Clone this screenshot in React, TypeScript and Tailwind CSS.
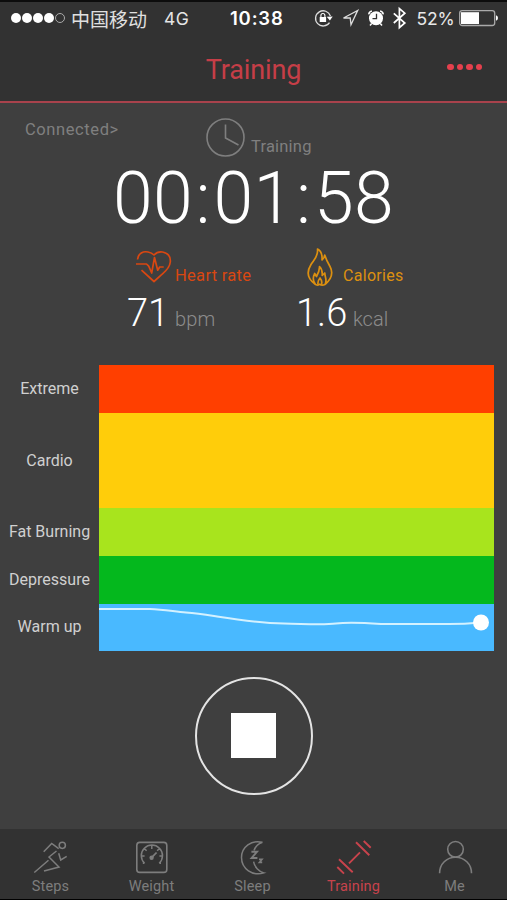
import type { ReactNode } from 'react';

interface Zone {
  label: string;
  color: string;
  height: string;
}

interface Tab {
  label: string;
  icon: ReactNode;
  active?: boolean;
}

const zones: Zone[] = [
  { label: 'Extreme', color: 'bg-[#ff3f00]', height: 'h-12' },
  { label: 'Cardio', color: 'bg-[#ffcd0a]', height: 'h-[95px]' },
  { label: 'Fat Burning', color: 'bg-[#a8e41d]', height: 'h-12' },
  { label: 'Depressure', color: 'bg-[#04b81d]', height: 'h-[47.5px]' },
  { label: 'Warm up', color: 'bg-[#49b9ff]', height: 'h-[47.5px]' },
];

const iconProps = {
  fill: 'none',
  stroke: 'currentColor',
  strokeWidth: 1.5,
  className: 'block h-10 w-10',
  viewBox: '0 0 40 40',
};

const tabs: Tab[] = [
  {
    label: 'Steps',
    icon: (
      <svg {...iconProps}>
        <circle cx="31.3" cy="16.3" r="3.1" />
        <path d="M12.7 22.7 20.7 14.5 27.7 19.7M25.5 22 18 28 28 38 13 42M17.5 31.2 3.3 43.5M27.7 24.3 29.7 31 35.7 27.3" />
      </svg>
    ),
  },
  {
    label: 'Weight',
    icon: (
      <svg {...iconProps}>
        <rect x="4.8" y="13.4" width="30" height="30" rx="3" strokeWidth="1.6" />
        <path d="M12.6 34.3A10.600 10.600 0 1 1 27.200 34.300M12.600 34.300h-1.800M27.200 34.300h1.800M19.800 16v4M9.600 27h3M27.400 27h3M12.400 19.500l2.200 2.200M27.400 19.500l-2.200 2.200" />
        <path d="m19.6 28.700 5-5.200" strokeWidth="1.8" />
        <circle cx="19.6" cy="28.700" r="2.200" fill="currentColor" stroke="none" />
      </svg>
    ),
  },
  {
    label: 'Sleep',
    icon: (
      <svg {...iconProps}>
        <path d="M29.500 13.300c-11-2.800-21 4.800-21 15.300 0 11.300 11 18.800 22.400 15.300-5.200-1.400-9.400-6-10.300-11.300M29.500 13.300c-4 1.500-7.300 4.500-8.500 8.200" />
        <path d="M18.400 22.800h5.600l-5.400 6.200h5.800" strokeWidth="1.9" />
        <path d="M26 30.400h3l-2.600 3h2.800" strokeWidth="1.6" />
      </svg>
    ),
  },
  {
    label: 'Training',
    active: true,
    icon: (
      <svg {...iconProps} strokeWidth={1.9}>
        <path d="m22 13.300 13.300 13M29.700 12l7 6.700M15 34.300l11-11M5 30.300l13.700 13M3.300 38l6.700 6.700" />
      </svg>
    ),
  },
  {
    label: 'Me',
    icon: (
      <svg {...iconProps} strokeWidth={1.6}>
        <circle cx="20.500" cy="20.300" r="7.800" />
        <path d="M4.600 44.200c0-9.200 7-15.900 15.900-15.900S36.500 35 36.500 44.200" />
      </svg>
    ),
  },
];

function StatusBar() {
  return (
    <div className="flex h-8 items-center pl-[11px] font-[Inter,sans-serif] text-[17px] text-white">
      <div className="flex w-[219px] items-center">
        <div className="flex gap-[1.6px]">
          {[0, 1, 2, 3].map((i) => (
            <span key={i} className="h-[9.5px] w-[9.5px] rounded-full bg-white" />
          ))}
          <span className="h-[9.5px] w-[9.5px] rounded-full border border-[#aaa]" />
        </div>
        <span className="ml-[6px] font-['Noto_Sans_CJK_SC',sans-serif] text-[19px] leading-none text-[#e0e0e0]">中国移动</span>
        <span className="ml-[17px] pt-0.5 text-[17.5px] tracking-[0.5px] text-[#e5e5e5]">4G</span>
      </div>
      <span className="w-[84px] pt-px text-[18.5px] font-semibold tracking-[0.8px]">10:38</span>
      <div className="flex items-center text-white">
        <svg className="h-8 w-[94px]" viewBox="0 0 94 32" fill="none">
          {/* orientation lock */}
          <path d="M15.500 20.600a7.600 7.600 0 1 1 .9-6.600" stroke="#ddd" strokeWidth="1.300" />
          <path d="m12.700 14.700 6-.1-2.800 3.800z" fill="#fff" />
          <path d="M5.700 15h6.400v5H5.700z" fill="#fff" />
          <path d="M6.900 15.300v-1.800a2 2 0 0 1 4 0v1.800" stroke="#fff" strokeWidth="1.100" />
          {/* location */}
          <path d="m29.500 16 14.200-7.600-6.700 14.300-.8-6.800z" stroke="#ddd" strokeWidth="1.300" />
          {/* alarm */}
          <circle cx="62" cy="16.200" r="7" fill="#fff" />
          <path d="M62.500 11.800v4.800h-4" stroke="#323232" strokeWidth="1.300" />
          <path d="M54.700 12.300q.6-2.800 3.200-3.200M69.300 12.300q-.6-2.800-3.200-3.200M57.500 21.800 56 23.500M66.500 21.800l1.500 1.700" stroke="#fff" strokeWidth="1.500" />
          {/* bluetooth */}
          <path d="m79.800 11.300 11 9.700-5.400 4.700V6.500l5.400 4.700-11 9.800" stroke="#fff" strokeWidth="1.700" />
        </svg>
        <span className="ml-[8.5px] w-[42.5px] pt-0.5 text-[17.5px] tracking-[-0.1px] text-[#e8e8e8]">52%</span>
        <svg className="h-8 w-10" viewBox="0 0 40 32" fill="none">
          <rect x=".7" y="8.700" width="35" height="14.800" rx="2.500" stroke="#aaa" strokeWidth="1.300" />
          <path d="M2 10.200h18v11.800H2z" fill="#fff" />
          <path d="M37 13.200q2 .5 2 2.800t-2 2.800z" fill="#fff" />
        </svg>
      </div>
    </div>
  );
}

function Header() {
  return (
    <div className="grid h-[67px] grid-cols-3 items-center">
      <span className="col-start-2 pt-1.5 text-center text-[27px] tracking-[-0.1px] text-[#c63e47]">Training</span>
      <div className="flex justify-end gap-[3px] pr-[25px]">
        {[0, 1, 2, 3].map((i) => (
          <span key={i} className="-mt-px h-[6.5px] w-[6.5px] rounded-full bg-[#e5404d]" />
        ))}
      </div>
    </div>
  );
}

function Metrics() {
  return (
    <div className="flex h-[98px] pt-[7px] leading-none">
      <div className="ml-[127px] w-[169px]">
        <div className="flex h-[42px] items-end text-[#d94711]">
          <svg className="ml-2 h-[42px] w-10" viewBox="0 0 40 42" fill="none" stroke="currentColor" strokeWidth="1.7" strokeLinejoin="round">
            <path d="M2.500 14.500C3 8 8.500 6 13 7c3 .6 5 2 6 3 2-2.200 5-3.500 8.500-3C33 8 35.700 12 35.300 17c-.5 6-5 9.500-8.700 12.700L19 36.500 6.500 25.200M1 19h10.500l2.200 2.200 3 6.800 2.800-15.500 3.200 12.700 2-3.200h4" />
          </svg>
          <span className="mb-[3px] text-[16.5px] tracking-[0.3px]">Heart rate</span>
        </div>
        <div className="mt-[7px] flex items-baseline">
          <span className="w-12 text-[38px] font-light text-white">71</span>
          <span className="text-[20px] font-light tracking-[0.2px] text-[#8c8c8c]">bpm</span>
        </div>
      </div>
      <div className="w-[140px]">
        <div className="flex h-[42px] items-end text-[#dc9010]">
          <svg className="ml-[9px] h-[42px] w-[38px]" viewBox="0 0 38 42" fill="none" stroke="currentColor" strokeWidth="1.7" strokeLinejoin="round">
            <path d="M10.500 39.500C2.500 34 1 27.500 6 19.500c3-5 7.500-8 6.500-15.500 4 2 5 5 4.500 11 1.800-1.200 2.500-2.700 2.700-5 1.800 5.500 3.300 8 5.300 11.500 3.500 6.500 1.500 12.500-5 18M10.500 39.500c-3-3.500-2.800-7-.8-11l1.800 3c2-3.500 3.200-6.500 3-10 2.600 2.500 3 5 2.700 9l2.600-2.500c0 4 2.700 7.500.2 11.500M10.500 39.500q2.800 1.300 4-.2 2.500 1.500 5.500.2M13 39q-.5-3 2-6 2.500 3 1.500 6" />
          </svg>
          <span className="mb-[3px] text-[16px] tracking-[0.3px]">Calories</span>
        </div>
        <div className="mt-[7px] flex items-baseline">
          <span className="w-[57px] text-[38px] font-light text-white">1.6</span>
          <span className="text-[20px] font-light text-[#8c8c8c]">kcal</span>
        </div>
      </div>
    </div>
  );
}

function ZoneChart() {
  return (
    <div className="mt-[29px] flex">
      <div className="w-[99px]">
        {zones.map((zone) => (
          <div key={zone.label} className={`flex items-center justify-center text-[16px] text-[#d0d0d0] ${zone.height}`}>
            {zone.label}
          </div>
        ))}
      </div>
      <div className="relative w-[395px]">
        {zones.map((zone) => (
          <div key={zone.label} className={`${zone.height} ${zone.color}`} />
        ))}
        <svg className="absolute bottom-0 left-0 h-12 w-[395px]" viewBox="0 0 395 48" fill="none">
          <path
            d="M0 6H51C65 6.500 75 8.500 87 9.500S105 11.500 118 13.500C140 17 160 20 185 20.500S225 22 237 20.500S265 19.800 282 21H350Q365 21 382 19.500"
            stroke="#d3f1ff"
            strokeWidth="2"
          />
          <circle cx="382" cy="19.500" r="8" fill="#fff" />
        </svg>
      </div>
    </div>
  );
}

function TabBar() {
  return (
    <div className="grid h-[70px] grid-cols-5 bg-[#323232] pr-0.5">
      {tabs.map((tab) => (
        <div key={tab.label} className={`flex flex-col items-center ${tab.active ? 'text-[#c8434c]' : 'text-[#7d7d7d]'}`}>
          <div className="h-12 [&>svg]:overflow-visible">{tab.icon}</div>
          <span className="pt-px text-[14.5px] leading-[17px] tracking-[0.15px]">{tab.label}</span>
        </div>
      ))}
    </div>
  );
}

export default function App() {
  return (
    <div className="flex h-[900px] w-[507px] flex-col overflow-hidden border-b border-t-2 border-b-black border-t-[#0c0c0c] bg-[#3f3f3f] font-[Roboto,sans-serif] whitespace-nowrap">
      <header className="border-b-2 border-[#a8424c] bg-[#323232]">
        <StatusBar />
        <Header />
      </header>
      <main className="flex-1">
        <div className="flex h-[56px] items-start leading-none text-[#7f7f7f]">
          <span className="ml-[25px] w-[180px] pt-[19px] text-[16.5px] tracking-[0.6px]">Connected&gt;</span>
          <svg className="mt-[14px] h-10 w-10" viewBox="0 0 40 40" fill="none" stroke="currentColor" strokeWidth="1.6">
            <circle cx="20.500" cy="20.500" r="18.500" />
            <path d="M20.500 7.500v13.500l13 7" />
          </svg>
          <span className="ml-1.5 pt-[36px] text-[16.5px] tracking-[0.2px]">Training</span>
        </div>
        <div className="h-[79px] text-center text-[71.5px] font-light leading-[80px] tracking-[0.4px] text-white">
          00<span className="mx-[2.5px]">:</span>01<span className="mx-[2.5px]">:</span>58
        </div>
        <Metrics />
        <ZoneChart />
        <div className="mt-[25.5px] flex justify-center">
          <button className="flex h-[118px] w-[118px] items-center justify-center rounded-full border-2 border-[#e4e4e4]">
            <span className="h-[45px] w-[45px] bg-white" />
          </button>
        </div>
      </main>
      <TabBar />
    </div>
  );
}
